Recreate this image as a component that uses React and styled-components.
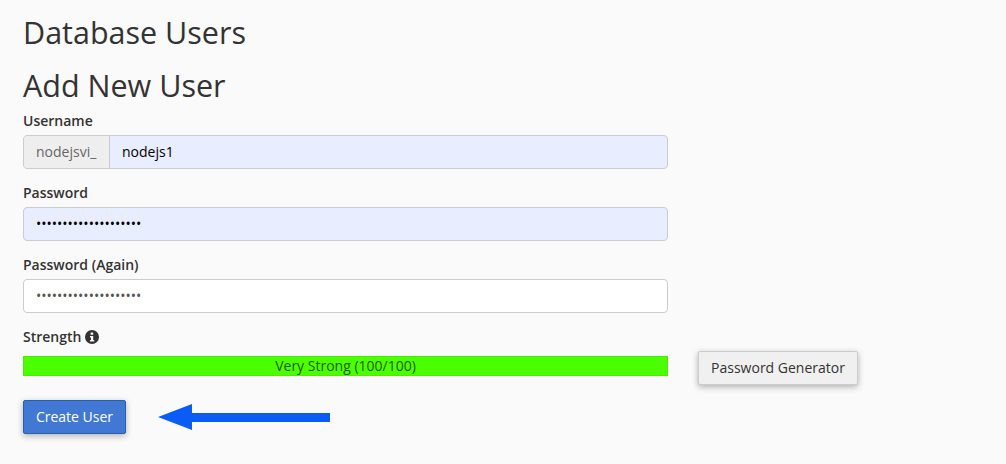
import React from 'react';
import styled, { createGlobalStyle } from 'styled-components';

const GlobalStyle = createGlobalStyle`
  html, body {
    margin: 0;
    background: #fafafa;
    color: #333;
    font-family: "Open Sans", "Noto Sans", sans-serif;
    font-size: 14px;
  }
`;

const Page = styled.div`
  position: relative;
  width: 1006px;
  height: 464px;
  padding: 13px 23px 0;
  box-sizing: border-box;
  overflow: hidden;
`;
const Title = styled.h1`
  margin: 0;
  font-size: 30.5px;
  font-weight: 400;
  line-height: 38px;
`;
const SubTitle = styled.h2`
  margin: 15px 0 0;
  font-size: 30.5px;
  font-weight: 400;
  line-height: 38px;
`;
const Form = styled.form`
  width: 645px;
  margin-top: 6px;
`;
const Field = styled.div`
  margin-bottom: 13px;
`;
const Label = styled.label`
  display: flex;
  align-items: center;
  gap: 4px;
  height: 20px;
  box-sizing: border-box;
  padding-top: 2px;
  margin: 0 0 5px;
  font-size: 14px;
  font-weight: 600;
  line-height: 18px;
`;
const InputGroup = styled.div`
  display: flex;
  height: 34px;
  box-sizing: border-box;
  border: 1px solid #ccc;
  border-radius: 4px;
  overflow: hidden;
  background: ${(p) => (p.$filled ? '#e8eeff' : '#fff')};
`;
const Addon = styled.span`
  display: flex;
  align-items: center;
  padding: 0 12px 2px 12px;
  width: 61px;
  background: #eee;
  border-right: 1px solid #ccc;
  color: #666;
  font-size: 14px;
`;
const Input = styled.input`
  flex: 1;
  min-width: 0;
  padding: 0 12px 2px;
  border: 0;
  outline: 0;
  background: transparent;
  color: ${(p) => (p.$filled ? '#000' : '#555')};
  font-family: inherit;
  font-size: 14px;
`;
const StrengthRow = styled.div`
  display: flex;
  align-items: flex-start;
  gap: 30px;
  width: 835px;
`;
const Strength = styled.div`
  width: 645px;
  flex: none;
`;
const Bar = styled.div`
  height: 20px;
  margin-top: 10px;
  background: #4cff00;
  box-shadow: inset 0 0 0 1px rgba(0, 0, 0, 0.06);
  text-align: center;
  font-size: 14px;
  line-height: 20px;
  color: #2a5a12;
`;
const Button = styled.button`
  height: 34px;
  box-sizing: border-box;
  padding: 0 0 2px;
  white-space: nowrap;
  border: 1px solid ${(p) => (p.$primary ? '#2d5fa8' : '#ccc')};
  border-radius: 2px;
  background: ${(p) => (p.$primary ? '#4178d4' : '#f0f0f0')};
  color: ${(p) => (p.$primary ? '#fff' : '#333')};
  font-family: inherit;
  font-size: 14px;
  box-shadow: 0 2px 6px rgba(0, 0, 0, 0.3);
`;
const GeneratorButton = styled(Button)`
  width: 160px;
  margin-top: 25px;
`;
const CreateButton = styled(Button)`
  width: 103px;
  display: block;
  margin-top: 15px;
`;
const Arrow = styled.svg`
  position: absolute;
  left: 158px;
  top: 404px;
`;

const InfoIcon = () => (
  <svg width="14" height="14" viewBox="0 0 14 14">
    <circle cx="7" cy="7" r="7" fill="#333" />
    <rect x="5.6" y="2.5" width="2.6" height="2.3" rx="0.5" fill="#fafafa" />
    <path d="M5 6h3.2v4H9.2v1.4H5V10h1V7.4H5z" fill="#fafafa" />
  </svg>
);

const App = () => {
  return (
    <Page>
      <GlobalStyle />
      <Title>Database Users</Title>
      <SubTitle>Add New User</SubTitle>
      <Form>
        <Field>
          <Label>Username</Label>
          <InputGroup $filled>
            <Addon>nodejsvi_</Addon>
            <Input $filled type="text" readOnly value="nodejs1" />
          </InputGroup>
        </Field>
        <Field>
          <Label>Password</Label>
          <InputGroup $filled>
            <Input $filled type="password" readOnly value="abcdefghijklmnopqrst" />
          </InputGroup>
        </Field>
        <Field>
          <Label>Password (Again)</Label>
          <InputGroup>
            <Input type="password" readOnly value="abcdefghijklmnopqrst" />
          </InputGroup>
        </Field>
        <StrengthRow>
          <Strength>
            <Label>
              Strength <InfoIcon />
            </Label>
            <Bar>Very Strong (100/100)</Bar>
          </Strength>
          <GeneratorButton type="button">Password Generator</GeneratorButton>
        </StrengthRow>
        <CreateButton $primary type="button">Create User</CreateButton>
      </Form>
      <Arrow width="172" height="26" viewBox="0 0 172 26">
        <path d="M0 13 34 0V9H172V18H34V26z" fill="#0a5cf5" />
      </Arrow>
    </Page>
  );
};

export default App;
